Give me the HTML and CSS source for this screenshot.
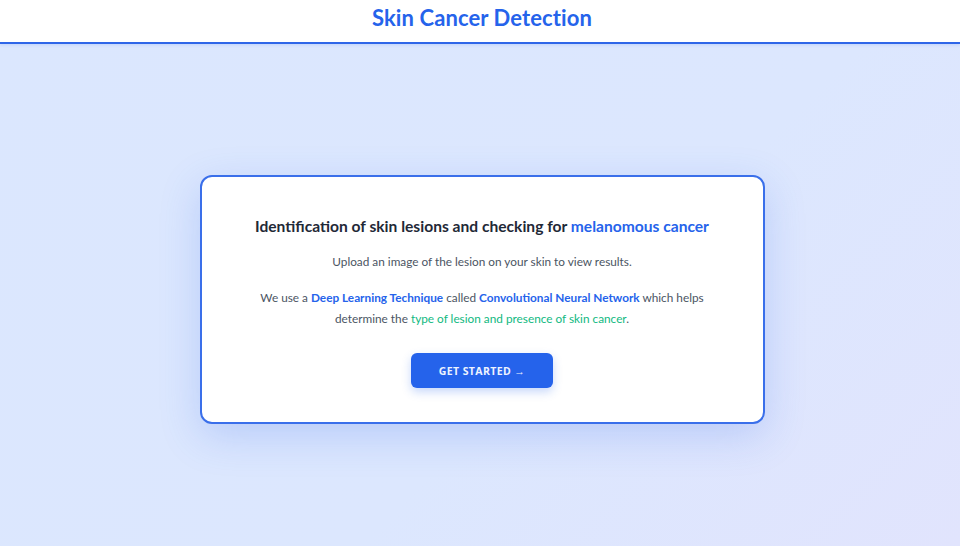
FILE: index.html
```html
<!DOCTYPE html>
<html>
<head>
<meta charset="utf-8">
<link rel="stylesheet" href="styles.css">
</head>
<body>
<header class="topbar">
  <h1 class="brand">Skin Cancer Detection</h1>
</header>
<main class="stage">
  <section class="card">
    <h2 class="card-title">Identification of skin lesions and checking for <span class="hl-blue">melanomous cancer</span></h2>
    <p class="lead">Upload an image of the lesion on your skin to view results.</p>
    <p class="desc">We use a <strong class="hl-blue">Deep Learning Technique</strong> called <strong class="hl-blue">Convolutional Neural Network</strong> which helps determine the <span class="hl-green">type of lesion and presence of skin cancer</span>.</p>
    <button class="cta">GET STARTED →</button>
  </section>
</main>
</body>
</html>
```
FILE: styles.css
```css
* { box-sizing: border-box; }
html, body { margin: 0; height: 100%; }
body {
  font-family: "Lato", "Noto Sans", sans-serif;
  background: linear-gradient(135deg, #dbe7fe 0%, #dce7fe 60%, #e1e4fd 100%);
  display: flex;
  flex-direction: column;
}
.topbar {
  height: 44px;
  background: #ffffff;
  border-bottom: 2px solid #2f66e8;
  display: flex;
  align-items: center;
  justify-content: center;
  padding-left: 4px;
  box-shadow: 0 1px 3px rgba(37, 99, 235, 0.15);
}
.brand {
  margin: 0;
  font-family: "Lato", "Open Sans", sans-serif;
  font-weight: 700;
  font-size: 22px;
  color: #2563eb;
  letter-spacing: 0.1px;
  position: relative;
  top: -4px;
}
.stage {
  flex: 1;
  display: flex;
  align-items: flex-start;
  justify-content: center;
  padding-top: 131px;
  padding-left: 4px;
}
.card {
  width: 565px;
  height: 249px;
  background: #ffffff;
  border: 2px solid #3a6fea;
  border-radius: 12px;
  box-shadow: 0 12px 40px rgba(59, 110, 234, 0.22);
  display: flex;
  flex-direction: column;
  align-items: center;
  padding-top: 39px;
  text-align: center;
}
.card-title {
  margin: 0;
  font-size: 15.6px;
  line-height: 20px;
  font-weight: 700;
  color: #1f2937;
}
.hl-blue { color: #2563eb; font-weight: 700; }
.hl-green { color: #10b981; }
.lead {
  margin: 17px 0 0;
  font-size: 11.8px;
  line-height: 18px;
  color: #4b5563;
}
.desc {
  margin: 15.5px 0 0;
  width: 470px;
  font-size: 11.8px;
  line-height: 21px;
  color: #4b5563;
}
.cta {
  margin-top: 24.5px;
  width: 142px;
  height: 35px;
  border: none;
  border-radius: 6px;
  background: #2563eb;
  color: #eef3ff;
  font-family: "Open Sans", sans-serif;
  font-weight: 700;
  font-size: 10.5px;
  letter-spacing: 0.4px;
  box-shadow: 0 4px 10px rgba(37, 99, 235, 0.25);
}
```
